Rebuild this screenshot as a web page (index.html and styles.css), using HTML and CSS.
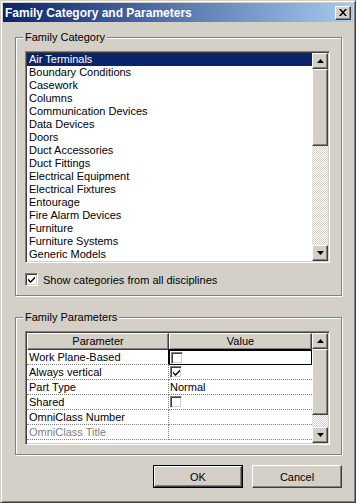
FILE: index.html
```html
<!DOCTYPE html>
<html lang="en">
  <head>
    <meta charset="UTF-8" />
    <title>Family Category and Parameters</title>
    <link rel="stylesheet" href="styles.css">
  </head>
  <body>
    <div class="window">
      <div class="titlebar">
        <span class="title">Family Category and Parameters</span>
        <button class="close" type="button">
          <svg width="8" height="7" viewBox="0 0 8 7"><path d="M0 0h2l2 2.5L6 0h2L5 3.5 8 7H6L4 4.5 2 7H0l3-3.5z" fill="#000"/></svg>
        </button>
      </div>

      <div class="client">
        <fieldset class="group group-category">
          <legend>Family Category</legend>
          <div class="listbox">
            <ul class="items">
              <li class="selected">Air Terminals</li>
              <li>Boundary Conditions</li>
              <li>Casework</li>
              <li>Columns</li>
              <li>Communication Devices</li>
              <li>Data Devices</li>
              <li>Doors</li>
              <li>Duct Accessories</li>
              <li>Duct Fittings</li>
              <li>Electrical Equipment</li>
              <li>Electrical Fixtures</li>
              <li>Entourage</li>
              <li>Fire Alarm Devices</li>
              <li>Furniture</li>
              <li>Furniture Systems</li>
              <li>Generic Models</li>
            </ul>
            <div class="vscroll">
              <div class="sb-btn"><svg width="7" height="4" viewBox="0 0 7 4"><path d="M3.5 0L7 4H0z" fill="#000"/></svg></div>
              <div class="sb-thumb list-thumb"></div>
              <div class="sb-track"></div>
              <div class="sb-btn"><svg width="7" height="4" viewBox="0 0 7 4"><path d="M0 0h7L3.5 4z" fill="#000"/></svg></div>
            </div>
          </div>
          <label class="check-row">
            <span class="checkbox">
              <svg width="7" height="7" viewBox="0 0 7 7"><path d="M0 2.5l2.5 2.5L7 0.5V2.5L2.5 7 0 4.5z" fill="#000"/></svg>
            </span>
            Show categories from all disciplines
          </label>
        </fieldset>

        <fieldset class="group group-params">
          <legend>Family Parameters</legend>
          <div class="grid">
            <div class="grid-body">
              <div class="grid-head">
                <div class="head-cell">Parameter</div>
                <div class="head-cell">Value</div>
              </div>
              <div class="grid-row">
                <div class="cell">Work Plane-Based</div>
                <div class="cell value focused"><span class="checkbox small"></span></div>
              </div>
              <div class="grid-row">
                <div class="cell">Always vertical</div>
                <div class="cell value">
                  <span class="checkbox small">
                    <svg width="7" height="7" viewBox="0 0 7 7"><path d="M0 2.5l2.5 2.5L7 0.5V2.5L2.5 7 0 4.5z" fill="#000"/></svg>
                  </span>
                </div>
              </div>
              <div class="grid-row">
                <div class="cell">Part Type</div>
                <div class="cell value">Normal</div>
              </div>
              <div class="grid-row">
                <div class="cell">Shared</div>
                <div class="cell value"><span class="checkbox small"></span></div>
              </div>
              <div class="grid-row">
                <div class="cell">OmniClass Number</div>
                <div class="cell value"></div>
              </div>
              <div class="grid-row">
                <div class="cell disabled">OmniClass Title</div>
                <div class="cell value"></div>
              </div>
            </div>
            <div class="vscroll">
              <div class="sb-btn"><svg width="7" height="4" viewBox="0 0 7 4"><path d="M3.5 0L7 4H0z" fill="#000"/></svg></div>
              <div class="sb-thumb grid-thumb"></div>
              <div class="sb-track"></div>
              <div class="sb-btn"><svg width="7" height="4" viewBox="0 0 7 4"><path d="M0 0h7L3.5 4z" fill="#000"/></svg></div>
            </div>
          </div>
        </fieldset>

        <div class="buttons">
          <button class="btn default" type="button">OK</button>
          <button class="btn" type="button">Cancel</button>
        </div>
      </div>
    </div>
  </body>
</html>
```

FILE: styles.css
```css
/* General reset */
* {
  box-sizing: border-box;
}

body {
  margin: 0;
  background: #d4d0c8;
  font-family: "Liberation Sans", Arial, sans-serif;
  font-size: 11px;
  color: #000;
}

/* Dialog frame */
.window {
  width: 356px;
  height: 503px;
  background: #d4d0c8;
  border: 1px solid;
  border-color: #d4d0c8 #404040 #404040 #d4d0c8;
  box-shadow: inset 1px 1px #fff, inset -1px -1px #808080;
  padding: 2px;
}

.titlebar {
  height: 19px;
  display: flex;
  align-items: center;
  justify-content: space-between;
  padding: 0 2px 0 2px;
  background: linear-gradient(to right, #0a246a, #a6caf0);
}

.title {
  color: #fff;
  font-weight: bold;
  font-size: 12px;
}

/* Raised 3d edge used by buttons */
.close,
.sb-btn,
.sb-thumb,
.head-cell,
.btn {
  background: #d4d0c8;
  border: 1px solid;
  border-color: #fff #404040 #404040 #fff;
  box-shadow: inset -1px -1px #808080;
}

.close {
  width: 16px;
  height: 14px;
  padding: 0;
  display: flex;
  align-items: center;
  justify-content: center;
}

.client {
  padding: 9px 11px 0 12px;
  display: flex;
  flex-direction: column;
}

/* Group boxes */
.group {
  margin: 0;
  padding: 7px 9px 9px 9px;
  border: 1px solid #808080;
  box-shadow: 1px 1px #fff, inset 1px 1px #fff;
  width: 327px;
  min-width: 0;
}

.group legend {
  padding: 0 2px;
  margin-left: -2px;
  background: #d4d0c8;
  line-height: 13px;
}

.group-params {
  margin-top: 15px;
  padding-bottom: 9px;
}

/* Sunken edge used by list, grid and checkboxes */
.listbox,
.grid,
.checkbox {
  background: #fff;
  border: 1px solid;
  border-color: #808080 #fff #fff #808080;
  box-shadow: inset 1px 1px #404040, inset -1px -1px #d4d0c8;
  padding: 1px;
}

.listbox {
  display: flex;
  width: 305px;
  height: 212px;
}

.items {
  flex: 1;
  margin: 0;
  padding: 0;
  list-style: none;
}

.items li {
  height: 13px;
  line-height: 13px;
  padding-left: 2px;
  white-space: nowrap;
}

.items li.selected {
  background: #0a246a;
  color: #fff;
}

/* Scroll bars */
.vscroll {
  width: 16px;
  display: flex;
  flex-direction: column;
}

.sb-btn {
  height: 16px;
  display: flex;
  align-items: center;
  justify-content: center;
}

.sb-track {
  flex: 1;
  background: repeating-conic-gradient(#fff 0 25%, #d4d0c8 0 50%) 0 0 / 2px 2px;
}

.list-thumb {
  height: 77px;
}

.grid-thumb {
  height: 66px;
}

/* Checkbox */
.check-row {
  display: flex;
  align-items: center;
  gap: 5px;
  margin-top: 10px;
  margin-left: 0;
}

.checkbox {
  width: 13px;
  height: 13px;
  display: inline-flex;
  align-items: center;
  justify-content: center;
}

.checkbox.small {
  width: 12px;
  height: 12px;
}

/* Parameters grid */
.grid {
  display: flex;
  width: 305px;
  height: 114px;
}

.grid-body {
  flex: 1;
  display: flex;
  flex-direction: column;
}

.grid-head,
.grid-row {
  display: grid;
  grid-template-columns: 142px 1fr;
}

.head-cell {
  height: 17px;
  line-height: 15px;
  text-align: center;
}

.grid-row {
  height: 15px;
}

.cell {
  line-height: 14px;
  padding-left: 2px;
  border-bottom: 1px dotted #808080;
  white-space: nowrap;
}

.cell:first-child {
  border-right: 1px dotted #808080;
}

.cell.value {
  display: flex;
  align-items: center;
  padding-left: 1px;
}

.cell.focused {
  border: 1px solid #000;
  box-shadow: -1px -1px 0 #000;
}

.cell.disabled {
  color: #808080;
}

/* Dialog buttons */
.buttons {
  display: flex;
  justify-content: flex-end;
  gap: 10px;
  margin-top: 10px;
}

.btn {
  width: 90px;
  height: 23px;
  padding: 0;
  font: inherit;
  color: #000;
}

.btn.default {
  outline: 1px solid #000;
  outline-offset: 0;
  width: 88px;
  height: 21px;
  margin: 1px 0;
}
```
